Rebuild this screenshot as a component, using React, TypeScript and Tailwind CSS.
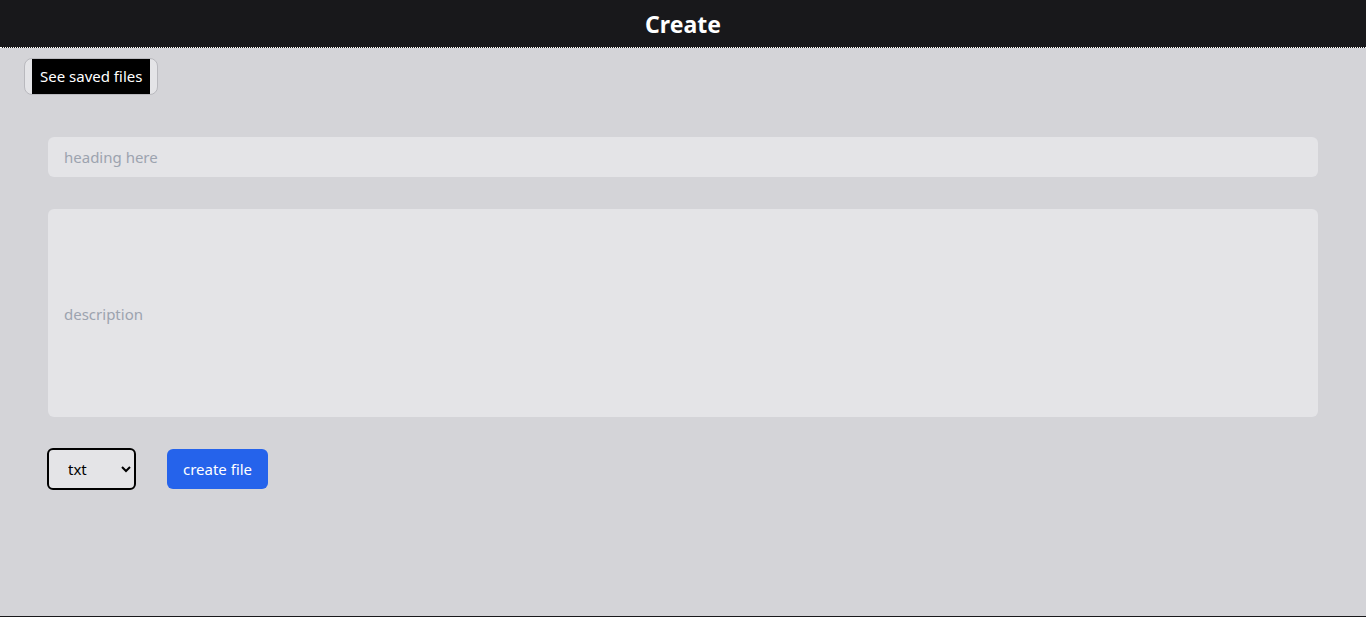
import React from "react";

export default function App() {
  return (
    <div className="min-h-[617px] bg-[#d4d4d8] font-['Noto_Sans',sans-serif]">
      <div className="h-[616px] flex flex-col">
        <header className="h-[48px] bg-[#18181b] border-b border-dotted border-white flex items-center justify-center">
          <h1 className="text-white text-[23px] font-bold leading-none pt-[1px]">Create</h1>
        </header>
        <div className="pl-6 pt-[10px]">
          <div className="inline-flex h-[37px] rounded-lg border border-[#b9b9be] bg-[#e4e4e7] px-[7px]">
            <span className="bg-black text-white text-[15px] flex items-center px-2">See saved files</span>
          </div>
        </div>
        <div className="px-12 pt-[42px] flex flex-col">
          <input
            className="h-10 w-full rounded-md bg-[#e4e4e7] px-4 text-[15px] text-black placeholder:text-[#9ca3af] outline-none"
            placeholder="heading here"
          />
          <textarea
            className="mt-8 h-[208px] w-full rounded-md bg-[#e4e4e7] px-4 pt-[94px] text-[15px] text-black placeholder:text-[#9ca3af] outline-none resize-none"
            placeholder="description"
          />
          <div className="mt-[31px] flex items-center gap-[31px]">
            <select className="h-[42px] w-[89px] -ml-[1px] rounded-md border-2 border-black bg-[#e4e4e7] pl-[15px] text-[15px] text-black">
              <option>txt</option>
            </select>
            <button className="h-10 w-[101px] rounded-md bg-[#2563eb] text-white text-[15px]">create file</button>
          </div>
        </div>
      </div>
      <div className="h-[1px] bg-[#18181b]"></div>
    </div>
  );
}
